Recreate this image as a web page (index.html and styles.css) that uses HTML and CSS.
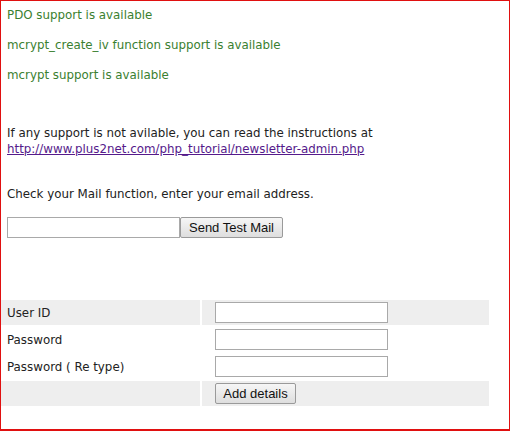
FILE: index.html
```html
<!DOCTYPE html>
<html>
<head>
<meta charset="utf-8">
<link rel="stylesheet" href="styles.css">
</head>
<body>
<div class="frame">
  <p class="ok first">PDO support is available</p>
  <p class="ok">mcrypt_create_iv function support is available</p>
  <p class="ok">mcrypt support is available</p>
  <p class="info">If any support is not avilable, you can read the instructions at<br><a href="#">http://www.plus2net.com/php_tutorial/newsletter-admin.php</a></p>
  <p class="mail">Check your Mail function, enter your email address.</p>
  <form class="mailform">
    <input class="email" type="text"><button class="btn send" type="button">Send Test Mail</button>
  </form>
  <div class="grid">
    <div class="cell label shade">User ID</div>
    <div class="cell field shade"><input class="txt" type="text"></div>
    <div class="cell label">Password</div>
    <div class="cell field"><input class="txt" type="password"></div>
    <div class="cell label">Password ( Re type)</div>
    <div class="cell field"><input class="txt" type="password"></div>
    <div class="cell label shade"></div>
    <div class="cell field shade"><button class="btn add" type="button">Add details</button></div>
  </div>
</div>
</body>
</html>
```
FILE: styles.css
```css
html, body { margin: 0; padding: 0; background: #fff; }
.frame {
  box-sizing: border-box;
  width: 510px;
  height: 431px;
  border: 1px solid #e01010;
  border-bottom-width: 2px;
  font-family: "DejaVu Sans", Verdana, sans-serif;
  font-size: 11.85px;
  line-height: 16px;
  color: #222;
  padding-top: 6px;
}
p { margin: 0; padding-left: 6px; }
.ok { color: #3a8030; margin-top: 14px; }
.ok.first { margin-top: 0; }
.info { margin-top: 42px; }
.info a { color: #551a8b; }
.mail { margin-top: 29px; }
.mailform { margin: 15px 0 0 6px; display: flex; height: 21px; }
.email {
  box-sizing: border-box; width: 173px; height: 21px; margin: 0;
  border: 1px solid #a9a9a9; padding: 0;
}
.btn {
  box-sizing: border-box; margin: 0; height: 21px;
  font-family: "Liberation Sans", Arial, sans-serif; font-size: 13px; color: #111;
  border: 1px solid #9a9a9a; border-radius: 2px;
  background: linear-gradient(#f6f6f6, #dedede);
  padding: 0 6px;
}
.send { width: 103px; }
.grid {
  margin-top: 62px;
  display: grid;
  grid-template-columns: 199px 287px;
  grid-auto-rows: 25px;
  column-gap: 2px;
  row-gap: 2px;
}
.cell { display: flex; align-items: center; }
.label { padding-left: 6px; }
.field { padding-left: 13px; }
.shade { background: #eeeeee; }
.txt {
  box-sizing: border-box; width: 173px; height: 21px; margin: 0;
  border: 1px solid #a9a9a9; padding: 0;
}
.add { width: 81px; }
```
